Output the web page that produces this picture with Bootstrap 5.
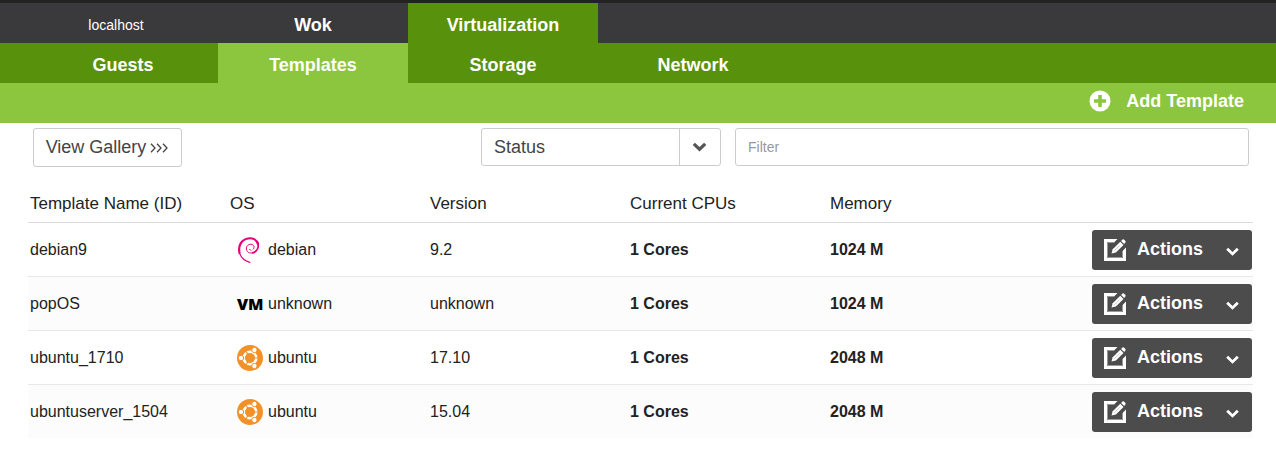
<!DOCTYPE html>
<html lang="en">
<head>
<meta charset="utf-8">
<meta name="viewport" content="width=device-width, initial-scale=1">
<title>Templates</title>
<link href="https://cdn.jsdelivr.net/npm/bootstrap@5.3.0/dist/css/bootstrap.min.css" rel="stylesheet">
<style>
  body { font-family: "Liberation Sans", Arial, sans-serif; font-size: 16px; color: #222; background: #fff; }
  .topbar { background: #3a393b; border-top: 3px solid #222; }
  .menubar { background: #58910c; }
  .toolbar { background: #8cc63f; height: 40px; padding: 0 32px 4px 0; }
  .host { width: 218px; padding-left: 14px; color: #fff; font-size: 14px; line-height: 40px; padding-top: 2px; height: 40px; }
  .tab { width: 190px; height: 40px; padding: 2px 0 0; line-height: 40px; font-size: 18px; font-weight: 700; color: #fff; text-align: center; }
  .tab:hover { color: #fff; }
  .menubar .nav { padding-left: 28px; }
  .tab-virt { background: #58910c; }
  .tab-current { background: #8cc63f; }
  .btn-add { font-size: 18px; font-weight: 700; line-height: 24px; color: #fff; gap: 15px; }
  .filters { display: grid; grid-template-columns: minmax(0, 434px) 240px 1fr; gap: 14px; padding: 5px 27px 0 33px; }
  .field { height: 38px; border: 1px solid #ccc; border-radius: 3px; }
  .btn-gallery { width: 149px; height: 39px; padding: 0; gap: 4px; font-size: 18px; color: #444; }
  .status-select { font-size: 18px; padding: 0 52px 0 12px; color: #444;
    background-image: url("data:image/svg+xml,%3Csvg xmlns='http://www.w3.org/2000/svg' viewBox='0 0 41 36'%3E%3Cpath d='M.5 0v36' stroke='%23ccc'/%3E%3Cpath d='M14.800 14.800l5.700 5.400 5.700-5.400' fill='none' stroke='%23555' stroke-width='3.200'/%3E%3C/svg%3E");
    background-size: 41px 36px; background-position: right center; }
  .filter-input { font-size: 14px; padding: 0 12px; }
  .filter-input::placeholder { color: #999; }
  .listing { padding: 18px 23px 0 28px; }
  .templates { table-layout: fixed; --bs-table-color: #222; --bs-table-border-color: #e8e8e8; }
  .templates > :not(caption) > * > * { padding: 1px 2px 0; height: 54px; vertical-align: middle; color: #222; }
  .templates > thead > tr > th { height: 37px; padding-top: 2px; font-size: 17px; line-height: 24px; font-weight: 400; border-color: #ddd; }
  .templates > tbody > tr:last-child > * { border-bottom: 0; }
  .templates > tbody > tr:nth-child(even) > * { background: #fcfcfc; }
  .templates > tbody > tr > td:last-child { padding-right: 1px; }
  .c-data { width: 200px; }
  .os-cell { gap: 5px; padding-left: 7px; }
  .os-icon { width: 26px; height: 26px; flex: none; }
  .vm-mark { width: 26px; font: 800 16px "Open Sans", sans-serif; color: #000; }
  .btn-actions { width: 160px; height: 40px; padding: 0 13px 0 12px; border: 0; border-radius: 3px; background: #4c4c4d; color: #fff; font-size: 18px; font-weight: 700; gap: 11px; }
  .btn-actions:hover { background: #3a393b; color: #fff; }
</style>
</head>
<body>
<svg class="d-none" aria-hidden="true">
  <symbol id="i-edit" viewBox="0 0 22 22">
    <path d="M13.500 0L10.500 3H3v16h16v-7.500l3-3V22H0V0z" fill="#fff"/>
    <path d="M10.500 3.500h-7v15h15v-6.500" fill="none" stroke="#999" stroke-width="1"/>
    <path d="M7.500 14.600l1.200-4.300 7.600-7.600 3.200 3.200-7.600 7.600z" fill="#fff"/>
    <path d="M17.100 2l1.400-1.400q.7-.6 1.400 0l1.500 1.500q.6.700 0 1.400L20.200 5z" fill="#fff"/>
    <path d="M10.300 11.800l5.400-5.400" stroke="#aaa" stroke-width=".6"/>
  </symbol>
  <symbol id="i-down" viewBox="0 0 13 9">
    <path d="M1.200 1.700l5.300 5.200 5.300-5.200" fill="none" stroke="#fff" stroke-width="2.800"/>
  </symbol>
  <symbol id="i-debian" viewBox="0 0 26 26">
    <g fill="none" stroke="#e6007e" stroke-linecap="round">
      <path d="M12.800 25.300C8 24 3.800 20.500 2.400 15.500" stroke-width="1.200"/>
      <path d="M2.500 16C1 9 4 2.800 11 1.500c5-1 9 1.500 9.900 5.500" stroke-width="2.200"/>
      <path d="M20.500 5c1.800 5-.2 9.200-4.500 10.800" stroke-width="1.900"/>
      <path d="M18 14.800c-4 2.700-8.200 1-8.600-2.600C9 8.700 12 6.600 15 7.400c2.200.8 2.700 3.200 1.200 4.800" stroke-width="1"/>
      <path d="M12.500 12.500l1.500.7" stroke-width=".8"/>
    </g>
  </symbol>
  <symbol id="i-ubuntu" viewBox="0 0 26 26">
    <circle cx="13" cy="13" r="13" fill="#f19128"/>
    <circle cx="13" cy="13" r="6.200" fill="none" stroke="#fff" stroke-width="2.800"/>
    <path d="M13 13h9M13 13L8.500 5.200M13 13l-4.500 7.800" stroke="#f19128" stroke-width="1.200"/>
    <circle cx="13" cy="13" r="4.800" fill="#f19128"/>
    <g fill="#fff" stroke="#f19128" stroke-width="1">
      <circle cx="4" cy="13" r="2.700"/><circle cx="17.400" cy="5" r="2.700"/><circle cx="17.400" cy="21" r="2.700"/>
    </g>
  </symbol>
</svg>

<header>
  <div class="topbar d-flex">
    <div class="host text-center">localhost</div>
    <nav class="nav">
      <a class="tab nav-link" href="#wok">Wok</a>
      <a class="tab tab-virt nav-link" href="#virtualization">Virtualization</a>
    </nav>
  </div>
  <div class="menubar">
    <nav class="nav">
      <a class="tab nav-link" href="#guests">Guests</a>
      <a class="tab tab-current nav-link" href="#templates">Templates</a>
      <a class="tab nav-link" href="#storage">Storage</a>
      <a class="tab nav-link" href="#network">Network</a>
    </nav>
  </div>
  <div class="toolbar d-flex justify-content-end align-items-center">
    <button type="button" class="btn-add btn p-0 border-0 d-flex align-items-center">
      <svg width="22" height="22" viewBox="0 0 22 22" aria-hidden="true"><circle cx="11" cy="11" r="10.500" fill="#fff"/><path d="M11 5v12M5 11h12" stroke="#8cc63f" stroke-width="3.600"/></svg>
      Add Template
    </button>
  </div>
</header>

<main>
  <form class="filters">
    <button type="button" class="btn-gallery field btn bg-white d-flex align-items-center justify-content-center">View Gallery
      <svg width="19" height="10" viewBox="0 0 19 10" aria-hidden="true"><path d="M1 .8L5 5 1 9.200M7 .8L11 5 7 9.200M13 .8L17 5l-4 4.200" fill="none" stroke="#444" stroke-width="1.300"/></svg>
    </button>
    <select class="status-select field form-select" aria-label="Sort by"><option>Status</option><option>Name</option></select>
    <input class="filter-input field form-control" type="text" placeholder="Filter" aria-label="Filter">
  </form>

  <div class="listing">
    <table class="templates table mb-0">
      <colgroup><col class="c-data"><col class="c-data"><col class="c-data"><col class="c-data"><col class="c-data"><col></colgroup>
      <thead>
        <tr><th scope="col">Template Name (ID)</th><th scope="col">OS</th><th scope="col">Version</th><th scope="col">Current CPUs</th><th scope="col">Memory</th><th></th></tr>
      </thead>
      <tbody>
        <tr>
          <td>debian9</td>
          <td><div class="os-cell d-flex align-items-center"><svg class="os-icon" aria-hidden="true"><use href="#i-debian"/></svg>debian</div></td>
          <td>9.2</td><td class="fw-bold">1 Cores</td><td class="fw-bold">1024 M</td>
          <td><button type="button" class="btn-actions btn d-flex align-items-center ms-auto"><svg width="22" height="22" aria-hidden="true"><use href="#i-edit"/></svg>Actions<svg class="ms-auto mt-1" width="13" height="9" aria-hidden="true"><use href="#i-down"/></svg></button></td>
        </tr>
        <tr>
          <td>popOS</td>
          <td><div class="os-cell d-flex align-items-center"><span class="vm-mark">VM</span>unknown</div></td>
          <td>unknown</td><td class="fw-bold">1 Cores</td><td class="fw-bold">1024 M</td>
          <td><button type="button" class="btn-actions btn d-flex align-items-center ms-auto"><svg width="22" height="22" aria-hidden="true"><use href="#i-edit"/></svg>Actions<svg class="ms-auto mt-1" width="13" height="9" aria-hidden="true"><use href="#i-down"/></svg></button></td>
        </tr>
        <tr>
          <td>ubuntu_1710</td>
          <td><div class="os-cell d-flex align-items-center"><svg class="os-icon" aria-hidden="true"><use href="#i-ubuntu"/></svg>ubuntu</div></td>
          <td>17.10</td><td class="fw-bold">1 Cores</td><td class="fw-bold">2048 M</td>
          <td><button type="button" class="btn-actions btn d-flex align-items-center ms-auto"><svg width="22" height="22" aria-hidden="true"><use href="#i-edit"/></svg>Actions<svg class="ms-auto mt-1" width="13" height="9" aria-hidden="true"><use href="#i-down"/></svg></button></td>
        </tr>
        <tr>
          <td>ubuntuserver_1504</td>
          <td><div class="os-cell d-flex align-items-center"><svg class="os-icon" aria-hidden="true"><use href="#i-ubuntu"/></svg>ubuntu</div></td>
          <td>15.04</td><td class="fw-bold">1 Cores</td><td class="fw-bold">2048 M</td>
          <td><button type="button" class="btn-actions btn d-flex align-items-center ms-auto"><svg width="22" height="22" aria-hidden="true"><use href="#i-edit"/></svg>Actions<svg class="ms-auto mt-1" width="13" height="9" aria-hidden="true"><use href="#i-down"/></svg></button></td>
        </tr>
      </tbody>
    </table>
  </div>
</main>
<script src="https://cdn.jsdelivr.net/npm/bootstrap@5.3.0/dist/js/bootstrap.bundle.min.js"></script>
</body>
</html>
